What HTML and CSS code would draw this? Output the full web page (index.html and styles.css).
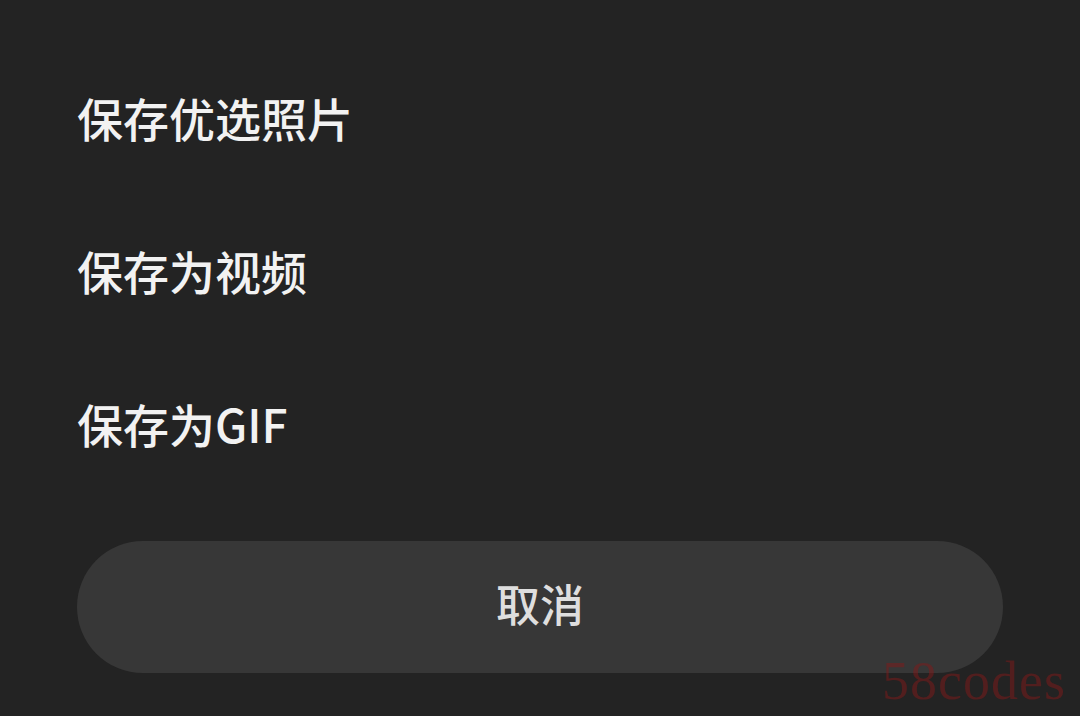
FILE: index.html
```html
<!DOCTYPE html>
<html lang="zh-CN">
<head>
    <meta charset="UTF-8">
    <meta name="viewport" content="width=device-width, initial-scale=1.0">
    <title>保存</title>
    <link rel="stylesheet" href="styles.css">
</head>
<body>

    <!-- Bottom sheet -->
    <div class="sheet">
        <ul class="options">
            <li class="option">保存优选照片</li>
            <li class="option">保存为视频</li>
            <li class="option">保存为GIF</li>
        </ul>

        <button class="cancel">取消</button>
    </div>

    <div class="watermark">58codes</div>

</body>
</html>
```

FILE: styles.css
```css
html, body {
    margin: 0;
    padding: 0;
}
body {
    background-color: #232323;
    font-family: "Noto Sans CJK SC", "Noto Sans", sans-serif;
    width: 1080px;
    height: 716px;
    overflow: hidden;
    position: relative;
}
.sheet {
    padding-top: 40px;
}
.options {
    list-style: none;
    margin: 0;
    padding: 0;
}
.option {
    height: 153px;
    display: flex;
    align-items: center;
    padding-left: 77px;
    color: #f2f2f2;
    font-size: 46px;
    font-weight: 500;
}
.cancel {
    display: block;
    margin: 42px 77px 0;
    width: 926px;
    height: 132px;
    border: none;
    border-radius: 66px;
    background-color: #373737;
    color: #dedede;
    font-family: inherit;
    font-size: 44px;
    font-weight: 500;
    padding: 0 0 8px;
}
.watermark {
    position: absolute;
    right: 14px;
    bottom: 4px;
    font-family: "Liberation Serif", serif;
    font-size: 54px;
    color: rgba(130, 25, 25, 0.5);
    letter-spacing: 1px;
}
```
